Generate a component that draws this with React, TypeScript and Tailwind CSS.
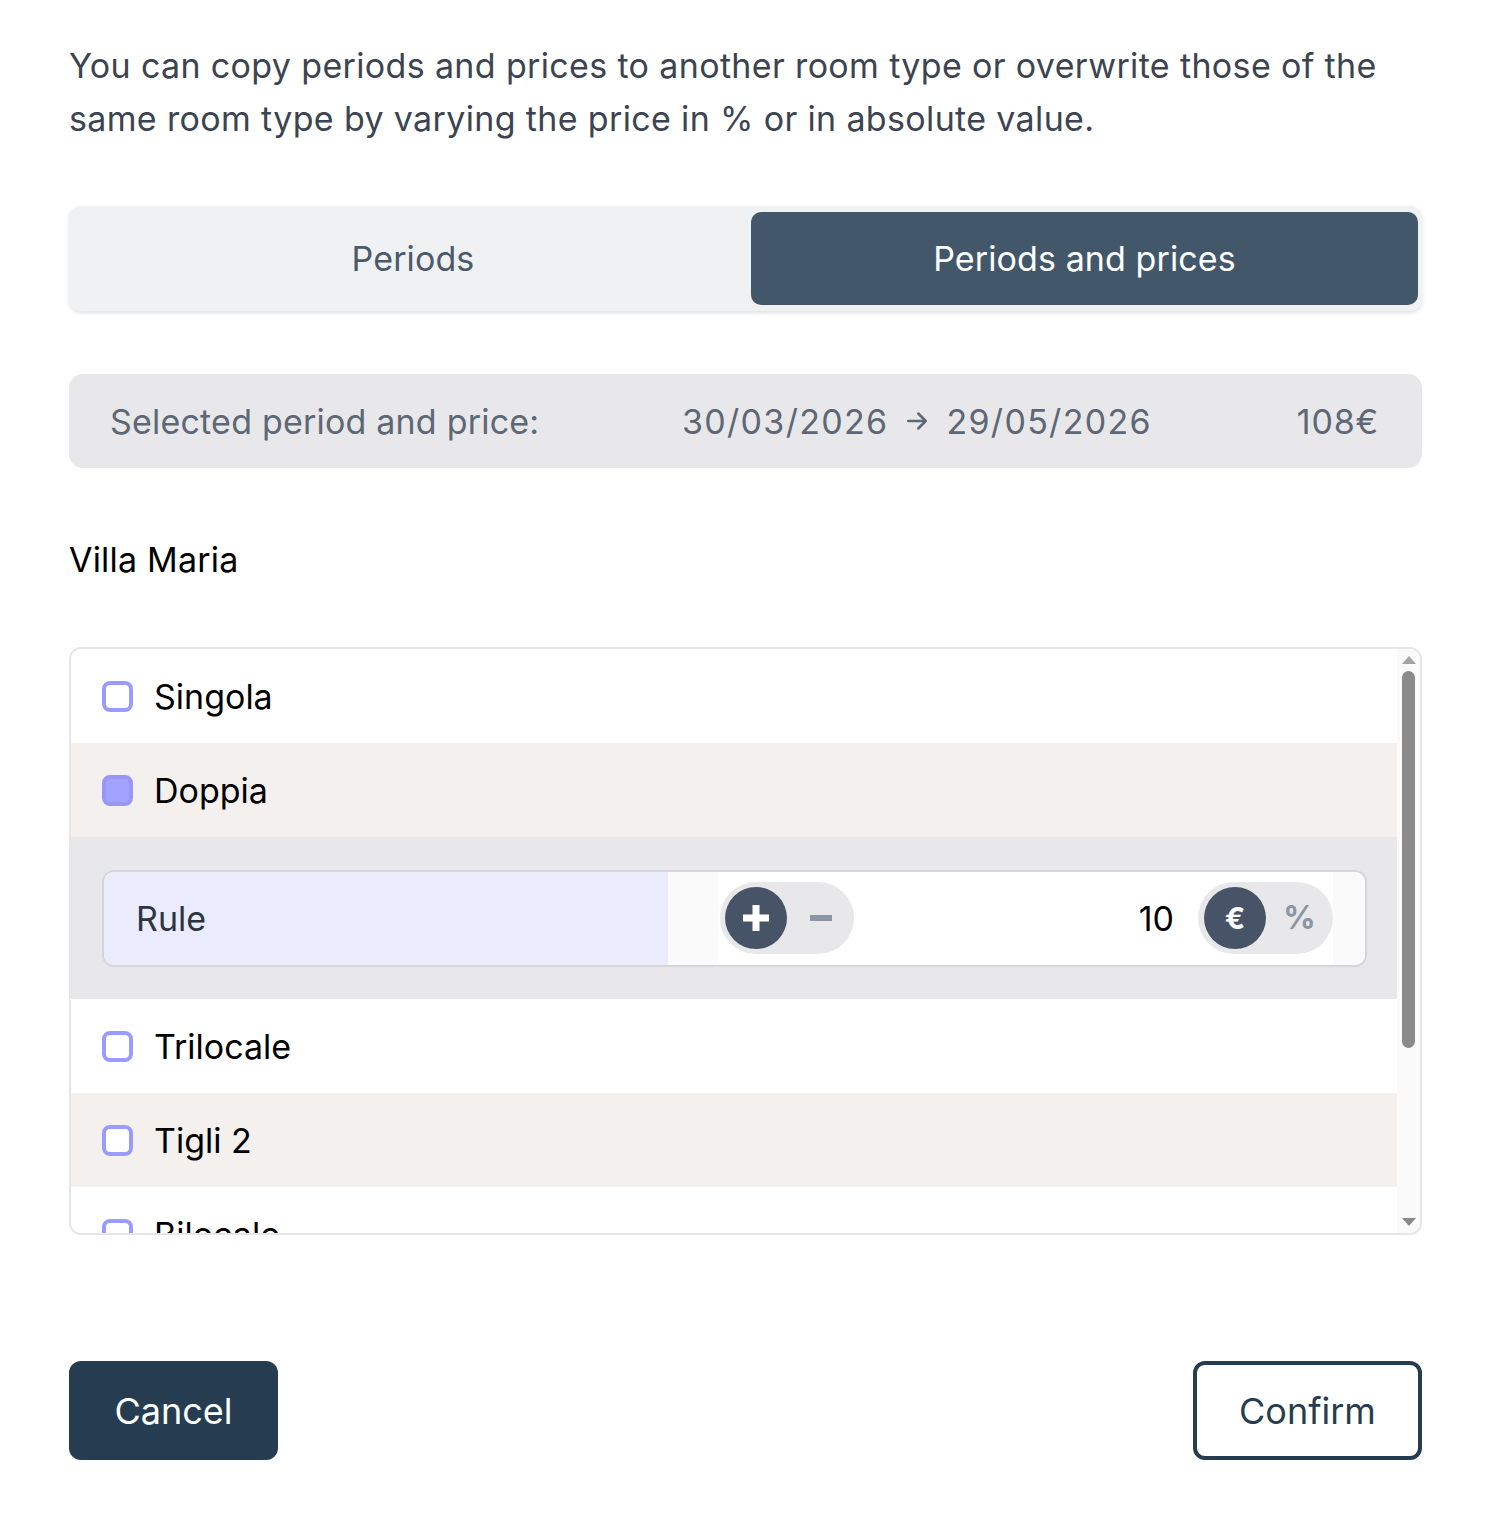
import React from "react";

const font = { fontFamily: "Inter, 'Noto Sans', sans-serif" };

function Check({ checked }: { checked?: boolean }) {
  return (
    <div
      className={
        "w-[31px] h-[31px] rounded-[8px] border-[4px] shrink-0 " +
        (checked ? "bg-[#a3a3ff] border-[#9797fb]" : "bg-white border-[#9b9bff]")
      }
    />
  );
}

function Row({ label, checked, bg, h }: { label: string; checked?: boolean; bg: string; h: string }) {
  return (
    <div className={"shrink-0 flex items-center pl-[31px] gap-[21px] " + h + " " + bg}>
      <Check checked={checked} />
      <span className="text-[34px] text-black tracking-[0px]">{label}</span>
    </div>
  );
}

export default function App() {
  return (
    <div className="bg-white w-[1502px] min-h-[1517px] pl-[69px] pt-[39px]" style={font}>
      <div className="w-[1353px]">
        <p className="text-[34px] leading-[53px] text-[#3d4451] tracking-[0.35px]">
          You can copy periods and prices to another room type or overwrite those of the same room type by varying the price in % or in absolute value.
        </p>

        <div className="mt-[61px] h-[105px] bg-[#f0f1f3] rounded-[12px] shadow-[0_2px_4px_rgba(0,0,0,0.12)] flex pl-[6px] pr-[4px] py-[6px]">
          <div className="flex-1 flex items-center justify-center text-[34px] text-[#4a5a6b] tracking-[0.1px]">
            Periods
          </div>
          <div className="w-[667px] bg-[#425769] rounded-[10px] flex items-center justify-center text-[34px] text-white tracking-[0.1px]">
            Periods and prices
          </div>
        </div>

        <div className="mt-[63px] h-[94px] bg-[#e8e8ea] rounded-[14px] flex items-center pl-[41px] pr-[43px] text-[34px] text-[#5d6776] tracking-[0.2px]">
          <span className="w-[572px]">Selected period and price:</span>
          <span className="flex items-center gap-[14px] tracking-[1.3px]">
            30/03/2026
            <svg width="30" height="30" viewBox="0 0 24 24" fill="none" stroke="#5d6776" strokeWidth="2" strokeLinecap="round" strokeLinejoin="round">
              <path d="M5 12h14M13 6l6 6-6 6" />
            </svg>
            29/05/2026
          </span>
          <span className="ml-auto tracking-[0.8px]">108€</span>
        </div>

        <div className="mt-[72px] text-[34px] text-black tracking-[0.2px] leading-[40px]">Villa Maria</div>

        <div className="mt-[67px] h-[588px] border-[2px] border-[#e6e6e6] rounded-[12px] flex overflow-hidden">
          <div className="flex-1 flex flex-col overflow-hidden">
            <Row label="Singola" bg="bg-white" h="h-[94px]" />
            <Row label="Doppia" checked bg="bg-[#f3f0ed]" h="h-[94px]" />
            <div className="h-[162px] shrink-0 bg-[#e8e8ea] flex items-center pl-[31px] pr-[30px]">
              <div className="flex-1 h-[97px] border-[2px] border-[#d6d6da] rounded-[12px] overflow-hidden flex bg-[#fafafa]">
                <div className="w-[564px] bg-[#eaebfc] flex items-center pl-[32px] text-[34px] text-[#2d3440] tracking-[0px]">
                  Rule
                </div>
                <div className="w-[50px] bg-[#fafafa]" />
                <div className="flex-1 bg-white flex items-center">
                  <div className="ml-[2px] w-[134px] h-[72px] rounded-full bg-[#e8e8ea] flex items-center pl-[5px]">
                    <div className="w-[62px] h-[62px] rounded-full bg-[#475467] flex items-center justify-center">
                      <svg width="28" height="28" viewBox="0 0 28 28">
                        <rect x="10.5" y="1" width="7" height="26" fill="white" />
                        <rect x="1" y="10.5" width="26" height="7" fill="white" />
                      </svg>
                    </div>
                    <div className="flex-1 flex items-center justify-center">
                      <div className="w-[22px] h-[6px] bg-[#8b95a5]" />
                    </div>
                  </div>
                  <span className="ml-auto mr-[24px] text-[34px] text-black tracking-[0px]">10</span>
                  <div className="w-[135px] h-[72px] rounded-full bg-[#e8e8ea] flex items-center pl-[6px]">
                    <div className="w-[62px] h-[62px] rounded-full bg-[#475467] flex items-center justify-center text-white text-[30px] font-bold">
                      €
                    </div>
                    <div className="flex-1 flex items-center justify-center text-[#8b95a5] text-[32px] font-bold">%</div>
                  </div>
                </div>
                <div className="w-[32px] bg-[#fafafa]" />
              </div>
            </div>
            <Row label="Trilocale" bg="bg-white" h="h-[94px]" />
            <Row label="Tigli 2" bg="bg-[#f3f0ed]" h="h-[94px]" />
            <Row label="Bilocale" bg="bg-white" h="h-[94px]" />
          </div>
          <div className="w-[23px] bg-[#fafafa] flex flex-col items-center pt-[6px] pb-[6px]">
            <svg width="16" height="10" viewBox="0 0 16 10">
              <path d="M8 1 L15 9 H1 Z" fill="#a3a3a3" />
            </svg>
            <div className="mt-[6px] w-[13px] h-[377px] rounded-full bg-[#8a8a8a]" />
            <div className="flex-1" />
            <svg width="16" height="10" viewBox="0 0 16 10">
              <path d="M1 1 H15 L8 9 Z" fill="#8a8a8a" />
            </svg>
          </div>
        </div>

        <div className="mt-[126px] flex justify-between">
          <button className="w-[209px] h-[99px] rounded-[12px] bg-[#263c50] text-white text-[36px] tracking-[0px]">
            Cancel
          </button>
          <button className="w-[229px] h-[99px] rounded-[12px] border-[4px] border-[#263c50] bg-white text-[#263c50] text-[36px] tracking-[0px]">
            Confirm
          </button>
        </div>
      </div>
    </div>
  );
}
